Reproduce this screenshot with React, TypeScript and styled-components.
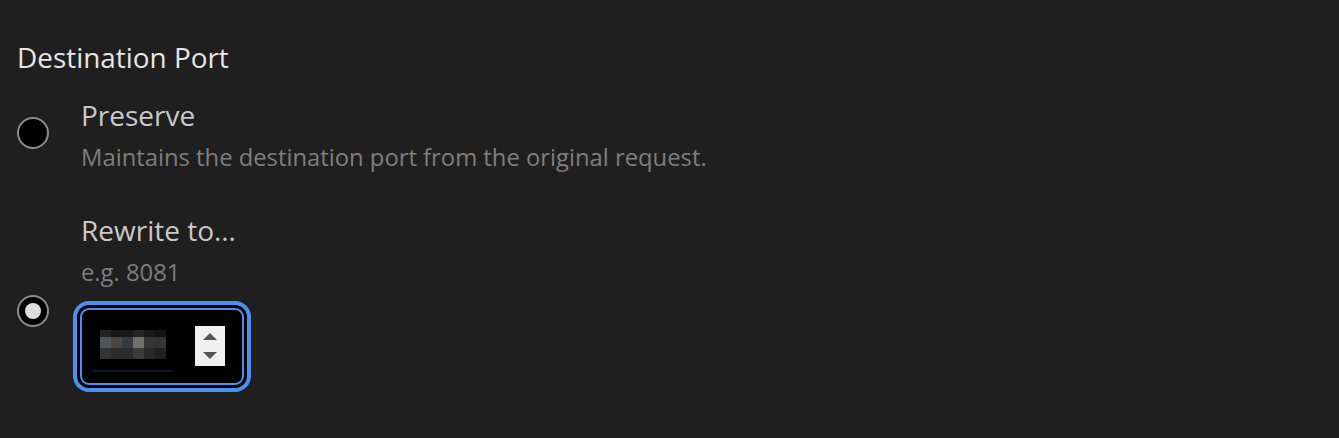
import React from "react";
import styled, { createGlobalStyle } from "styled-components";

const Global = createGlobalStyle`
  html, body { margin: 0; padding: 0; background: #1f1f1f; }
  body { font-family: "Open Sans", "Noto Sans", sans-serif; }
`;

const Page = styled.div`
  padding: 39px 17px;
  background: #1f1f1f;
  min-height: 438px;
  box-sizing: border-box;
`;

const Heading = styled.div`
  font-size: 27.9px;
  line-height: 36px;
  color: #e6e6e6;
  margin-bottom: 22px;
`;

const OptionList = styled.div`
  display: flex;
  flex-direction: column;
  gap: 39px;
`;

const OptionRow = styled.div`
  display: grid;
  grid-template-columns: 32px 1fr;
  column-gap: 32px;
  align-items: start;
`;

const Radio = styled.div<{ $top: number; $checked?: boolean }>`
  width: 32px;
  height: 32px;
  box-sizing: border-box;
  border-radius: 50%;
  border: 2px solid #8c8c8c;
  background: #000;
  margin-top: ${(p) => p.$top}px;
  display: flex;
  align-items: center;
  justify-content: center;
  &::after {
    content: "";
    display: ${(p) => (p.$checked ? "block" : "none")};
    width: 16px;
    height: 16px;
    border-radius: 50%;
    background: #dedede;
  }
`;

const Body = styled.div`
  display: flex;
  flex-direction: column;
  align-items: flex-start;
`;

const Label = styled.div`
  font-size: 28px;
  line-height: 36px;
  color: #c9c9c9;
`;

const Hint = styled.div`
  font-size: 23.8px;
  line-height: 32px;
  color: #7e7e7e;
  margin-top: 8px;
`;

const NumberField = styled.div`
  margin-top: 20px;
  margin-left: -1px;
  width: 164px;
  height: 77px;
  box-sizing: border-box;
  border: 2px solid #4a90f0;
  border-radius: 9px;
  background: #000;
  box-shadow: 0 0 0 3px #000, 0 0 0 7px #4a90f0;
  display: flex;
  align-items: flex-start;
  padding: 16px 0 0 11px;
`;

const ValueColumn = styled.div`
  width: 80px;
  display: flex;
  flex-direction: column;
`;

const Pixelated = styled.div`
  margin-top: 4px;
  margin-left: 7px;
  display: grid;
  grid-template-columns: repeat(6, 11px);
  grid-template-rows: 7px 11px 11px;
`;

const Cell = styled.div<{ $c: string }>`
  background: ${(p) => p.$c};
`;

const Underline = styled.div`
  margin-top: 11px;
  width: 80px;
  height: 2px;
  background: #0e1a2b;
`;

const Spinner = styled.div`
  margin-left: 22px;
  width: 30px;
  height: 40px;
  background: #f0f0f0;
  position: relative;
`;

const Arrow = styled.svg<{ $top: number }>`
  position: absolute;
  left: 8px;
  top: ${(p) => p.$top}px;
  display: block;
`;

const pixels = [
  "#232323", "#171717", "#1a1a1a", "#242424", "#191919", "#131313",
  "#51555c", "#4b4641", "#363940", "#70716b", "#373636", "#343434",
  "#333333", "#2d2d2d", "#2b2c2e", "#3b3b39", "#292929", "#1f1f1f",
];

export default function App() {
  return (
    <>
      <Global />
      <Page>
        <Heading>Destination Port</Heading>
        <OptionList>
          <OptionRow>
            <Radio $top={20} />
            <Body>
              <Label>Preserve</Label>
              <Hint>Maintains the destination port from the original request.</Hint>
            </Body>
          </OptionRow>
          <OptionRow>
            <Radio $top={83} $checked />
            <Body>
              <Label>Rewrite to…</Label>
              <Hint>e.g. 8081</Hint>
              <NumberField>
                <ValueColumn>
                  <Pixelated>
                    {pixels.map((c, i) => (
                      <Cell key={i} $c={c} />
                    ))}
                  </Pixelated>
                  <Underline />
                </ValueColumn>
                <Spinner>
                  <Arrow $top={7} width="14" height="7" viewBox="0 0 14 7">
                    <polygon points="7,0 14,7 0,7" fill="#555" />
                  </Arrow>
                  <Arrow $top={26} width="14" height="7" viewBox="0 0 14 7">
                    <polygon points="0,0 14,0 7,7" fill="#555" />
                  </Arrow>
                </Spinner>
              </NumberField>
            </Body>
          </OptionRow>
        </OptionList>
      </Page>
    </>
  );
}
